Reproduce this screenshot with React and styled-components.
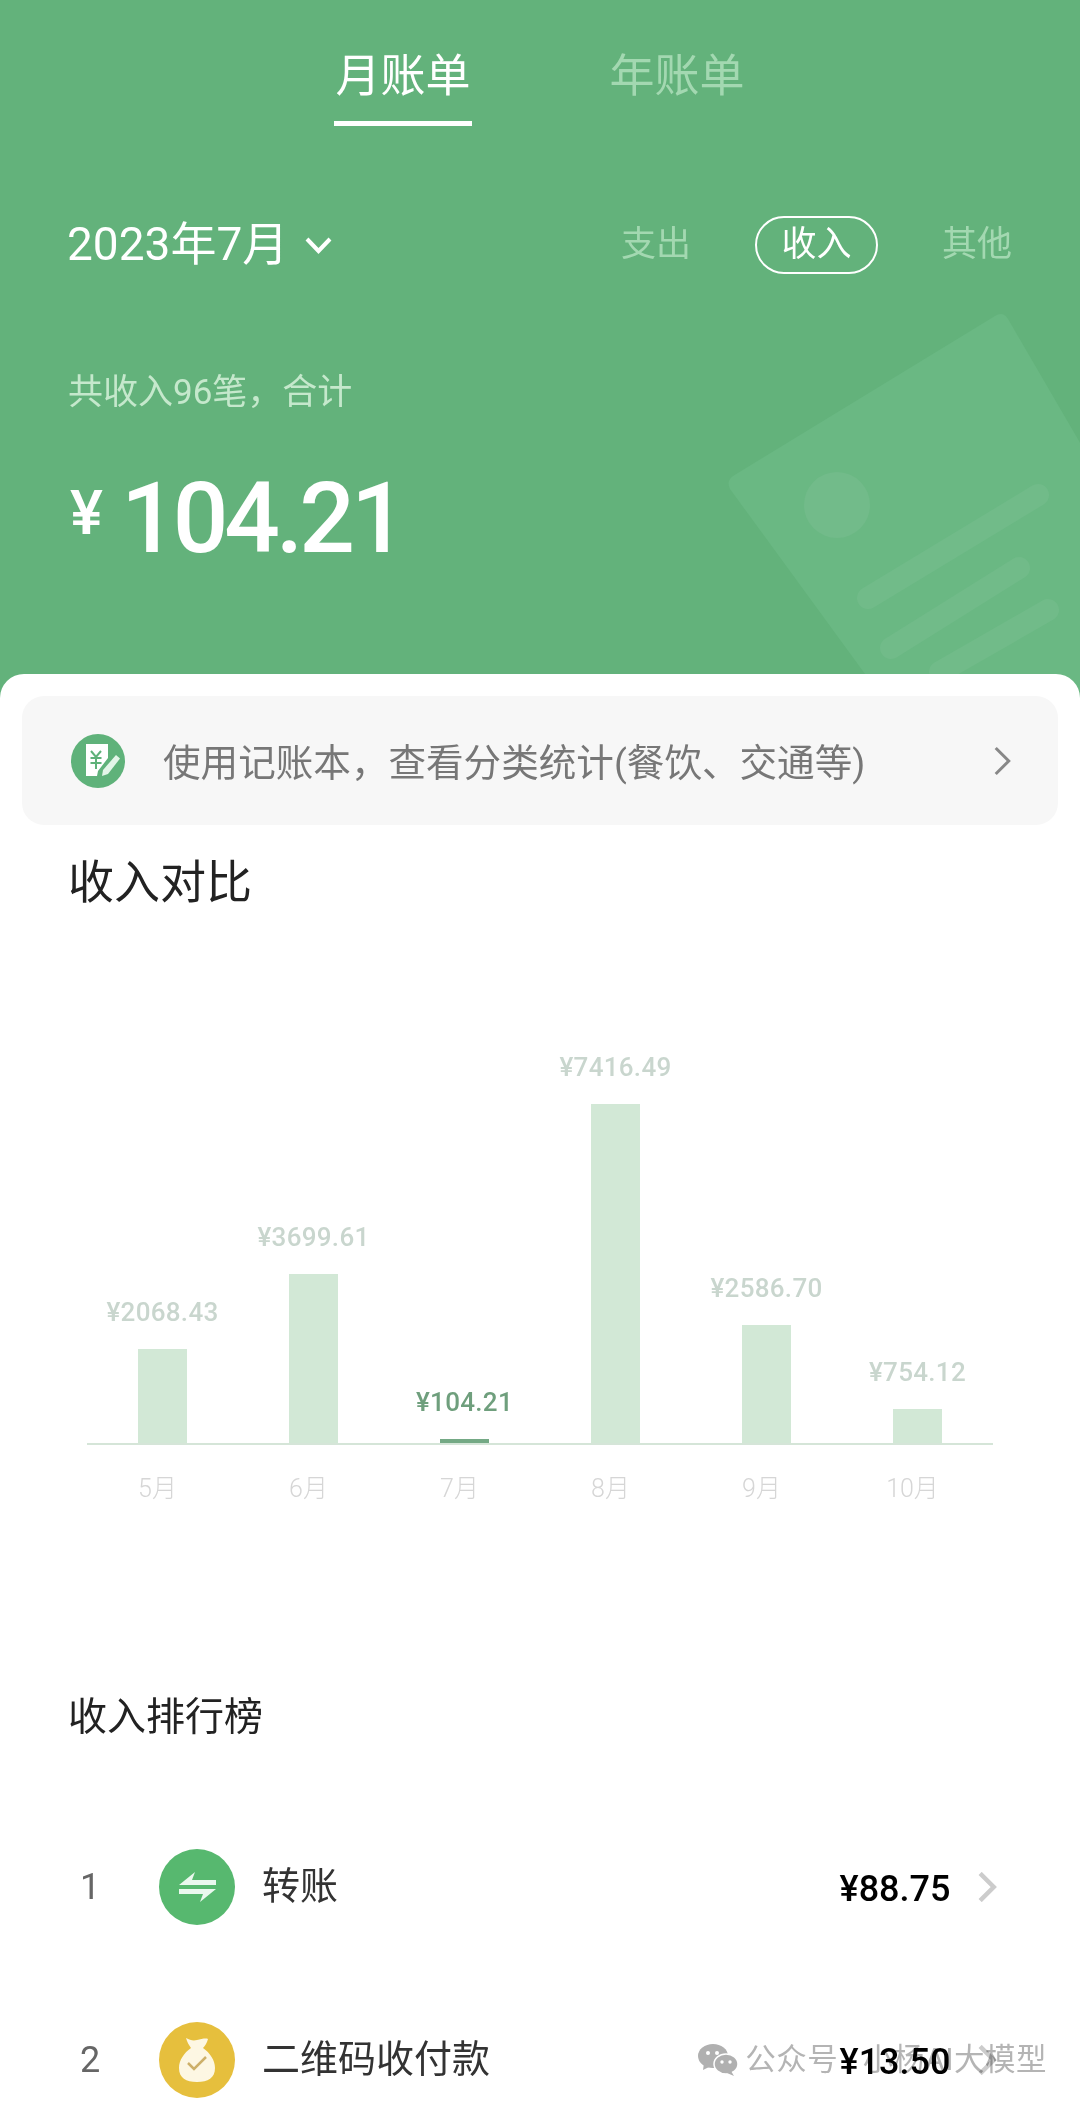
import React from "react";
import styled, { createGlobalStyle } from "styled-components";

const GlobalStyle = createGlobalStyle`
  html, body {
    margin: 0;
    padding: 0;
    background: #fff;
  }
`;

const Page = styled.div`
  position: relative;
  width: 1080px;
  height: 2104px;
  overflow: hidden;
  background: #fff;
  font-family: Roboto, "Noto Sans CJK SC", sans-serif;
`;

const Header = styled.header`
  position: relative;
  height: 700px;
  padding-top: 44px;
  box-sizing: border-box;
  background: #63b27b;
  overflow: hidden;
`;

const HeaderArt = styled.svg`
  position: absolute;
  left: 0;
  top: 0;
`;

const Tabs = styled.nav`
  position: relative;
  display: flex;
  justify-content: center;
  gap: 136px;
`;

const Tab = styled.div`
  width: 138px;
  height: 82px;
  box-sizing: border-box;
  border-bottom: 5px solid ${p => (p.$active ? "#fff" : "transparent")};
  text-align: center;
  font-size: 45px;
  line-height: 66px;
  color: ${p => (p.$active ? "#fff" : "#a3d8b1")};
`;

const FilterRow = styled.div`
  position: relative;
  display: flex;
  align-items: center;
  justify-content: space-between;
  height: 58px;
  margin-top: 90px;
  padding: 0 68px 0 67px;
`;

const MonthPicker = styled.div`
  display: flex;
  align-items: center;
  gap: 17px;
  font-size: 46px;
  color: #fff;
`;

const MonthLabel = styled.span`
  padding-bottom: 10px;
`;

const Kinds = styled.div`
  display: flex;
  align-items: center;
  gap: 64px;
`;

const Kind = styled.div`
  font-size: 35px;
  line-height: 54px;
  color: ${p => (p.$active ? "#fff" : "#a3d8b1")};
  ${p =>
    p.$active
      ? `
    width: 123px;
    height: 58px;
    box-sizing: border-box;
    border: 2px solid #fff;
    border-radius: 29px;
    text-align: center;
  `
      : ""}
`;

const Summary = styled.div`
  position: relative;
  margin: 96px 0 0 68px;
  font-size: 35px;
  line-height: 46px;
  color: #c5e8cc;
`;

const Amount = styled.div`
  position: relative;
  display: flex;
  align-items: flex-start;
  gap: 18px;
  margin: 53px 0 0 70px;
  color: #fff;
`;

const Yen = styled.span`
  font-size: 62px;
  line-height: 88px;
  font-weight: 500;
`;

const AmountValue = styled.span`
  font-size: 98px;
  line-height: 100px;
  font-weight: 500;
  letter-spacing: -4px;
`;

const Card = styled.main`
  position: relative;
  margin-top: -26px;
  padding-top: 22px;
  border-radius: 24px 24px 0 0;
  background: #fff;
`;

const Banner = styled.div`
  display: flex;
  align-items: center;
  height: 129px;
  margin: 0 22px;
  padding: 0 46px 0 49px;
  box-sizing: border-box;
  border-radius: 22px;
  background: #f7f7f7;
  font-size: 37.6px;
  color: #777;
`;

const BannerText = styled.span`
  flex: 1;
  margin-left: 38px;
  padding-bottom: 2px;
  white-space: nowrap;
`;

const Title = styled.h2`
  margin: 27px 0 0 68px;
  font-size: 46px;
  line-height: 60px;
  font-weight: 400;
  color: #222;
`;

const Plot = styled.div`
  display: flex;
  align-items: flex-end;
  height: 533px;
  margin: 0 87px;
  box-sizing: border-box;
  border-bottom: 2px solid #d5e5d8;
`;

const Column = styled.div`
  flex: 1;
  display: flex;
  flex-direction: column;
  align-items: center;
`;

const BarLabel = styled.div`
  margin-bottom: 22px;
  font-size: 26px;
  line-height: 30px;
  letter-spacing: 0.3px;
  font-weight: 500;
  color: ${p => (p.$active ? "#6f9f7d" : "#c9d6ce")};
`;

const Bar = styled.div`
  width: 49px;
  height: ${p => p.$height}px;
  background: ${p => (p.$active ? "#74a985" : "#d2e8d6")};
`;

const Months = styled.div`
  display: flex;
  margin: 29px 87px 0;
`;

const Month = styled.div`
  flex: 1;
  padding-right: 10px;
  text-align: center;
  font-size: 25px;
  font-weight: 300;
  line-height: 30px;
  color: #d6d6d6;
`;

const RankTitle = styled.h3`
  margin: 188px 0 58px 68px;
  font-size: 39px;
  line-height: 50px;
  font-weight: 400;
  color: #222;
`;

const Row = styled.div`
  display: flex;
  align-items: center;
  height: 173px;
  padding: 0 83px 0 80px;
`;

const Rank = styled.span`
  width: 79px;
  font-size: 36px;
  color: #666;
`;

const RowIcon = styled.div`
  display: flex;
  align-items: center;
  justify-content: center;
  flex: none;
  width: 76px;
  height: 76px;
  border-radius: 50%;
  background: ${p => p.$color};
`;

const RowName = styled.span`
  flex: 1;
  margin-left: 27px;
  padding-bottom: 8px;
  font-size: 38px;
  color: #333;
`;

const RowAmount = styled.span`
  margin-right: 27px;
  padding-top: 5px;
  font-size: 36px;
  font-weight: 500;
  color: #000;
`;

const Watermark = styled.div`
  position: absolute;
  right: 33px;
  bottom: 27px;
  display: flex;
  align-items: center;
  gap: 7px;
  font-size: 30.5px;
  letter-spacing: 0.5px;
  line-height: 34px;
  color: #b4b4b4;
  mix-blend-mode: multiply;
`;

const bars = [
  { month: "5月", value: "¥2068.43", height: 94 },
  { month: "6月", value: "¥3699.61", height: 169 },
  { month: "7月", value: "¥104.21", height: 4, active: true },
  { month: "8月", value: "¥7416.49", height: 339 },
  { month: "9月", value: "¥2586.70", height: 118 },
  { month: "10月", value: "¥754.12", height: 34 }
];

const Chevron = ({ color, size = 30, width = 3 }) => (
  <svg width={size * 0.65} height={size} viewBox="0 0 18 30" fill="none">
    <path
      d="M3 3l12 12L3 27"
      stroke={color}
      strokeWidth={width}
      strokeLinecap="square"
    />
  </svg>
);

const DownArrow = () => (
  <svg width="27" height="18" viewBox="0 0 27 18" fill="none">
    <path d="M2 3l11.5 12L25 3" stroke="#fff" strokeWidth="4" />
  </svg>
);

const LedgerIcon = () => (
  <svg width="54" height="54" viewBox="0 0 54 54">
    <circle cx="27" cy="27" r="27" fill="#5fb27a" />
    <path d="M15 10h22v14L27 37l-1 5H15z" fill="#fff" />
    <path
      d="M20 17l5 6 5-6M19.500 24h11M19.500 29h11M25 23v12"
      fill="none"
      stroke="#5fb27a"
      strokeWidth="2"
    />
    <path d="M45 21l4 3.500L37 40l-6 2 1-6z" fill="#e3f5e8" />
  </svg>
);

const TransferIcon = () => (
  <svg width="37" height="30" viewBox="0 0 37 30">
    <path d="M0 13L16 0l-3 8h24v5z" fill="#eaf8ee" />
    <path d="M37 17L21 30l3-8H0v-5z" fill="#eaf8ee" />
  </svg>
);

const BagIcon = () => (
  <svg width="36" height="46" viewBox="0 0 36 46">
    <path
      d="M7 1c4 2 7 3 11 2s9-2 11-1c-1 4-3 7-5 9 7 5 12 12 12 20 0 10-7 14-18 14S0 41 0 31c0-8 5-15 12-20C10 8 8 5 7 1z"
      fill="#fdf7e3"
    />
    <path
      d="M9 26l6 6 12-12"
      fill="none"
      stroke="#cdb06a"
      strokeWidth="2.500"
    />
  </svg>
);

const WeChatIcon = () => (
  <svg width="40" height="32" viewBox="0 0 40 32">
    <ellipse cx="15" cy="12" rx="15" ry="12" fill="#b0b0b0" />
    <path d="M6 19l-1 7 8-4z" fill="#b0b0b0" />
    <ellipse cx="28" cy="20" rx="12" ry="10" fill="#b0b0b0" stroke="#fff" strokeWidth="1.500" />
    <path d="M33 27l3 5-7-3z" fill="#b0b0b0" />
    <circle cx="10" cy="9" r="2" fill="#fff" />
    <circle cx="19" cy="9" r="2" fill="#fff" />
    <circle cx="24" cy="18" r="1.700" fill="#fff" />
    <circle cx="32" cy="18" r="1.700" fill="#fff" />
  </svg>
);

const App = () => (
  <Page>
    <GlobalStyle />
    <Header>
      <HeaderArt width="1080" height="700" viewBox="0 0 1080 700">
        <path
          d="M995 316q8-5 13 3l82 141v240H884L730 489q-4-8 3-13z"
          fill="#6ab883"
        />
        <circle cx="837" cy="505" r="33" fill="#72bb8a" />
        <path
          d="M868 598l170-103M891 648l128-80M940 672l108-62"
          stroke="#71bb89"
          strokeWidth="22"
          strokeLinecap="round"
        />
      </HeaderArt>
      <Tabs>
        <Tab $active>月账单</Tab>
        <Tab>年账单</Tab>
      </Tabs>
      <FilterRow>
        <MonthPicker>
          <MonthLabel>2023年7月</MonthLabel>
          <DownArrow />
        </MonthPicker>
        <Kinds>
          <Kind>支出</Kind>
          <Kind $active>收入</Kind>
          <Kind>其他</Kind>
        </Kinds>
      </FilterRow>
      <Summary>共收入96笔，合计</Summary>
      <Amount>
        <Yen>¥</Yen>
        <AmountValue>104.21</AmountValue>
      </Amount>
    </Header>
    <Card>
      <Banner>
        <LedgerIcon />
        <BannerText>使用记账本，查看分类统计(餐饮、交通等)</BannerText>
        <Chevron color="#888" />
      </Banner>
      <Title>收入对比</Title>
      <Plot>
        {bars.map(b => (
          <Column key={b.month}>
            <BarLabel $active={b.active}>{b.value}</BarLabel>
            <Bar $height={b.height} $active={b.active} />
          </Column>
        ))}
      </Plot>
      <Months>
        {bars.map(b => (
          <Month key={b.month}>{b.month}</Month>
        ))}
      </Months>
      <RankTitle>收入排行榜</RankTitle>
      <Row>
        <Rank>1</Rank>
        <RowIcon $color="#57b86f">
          <TransferIcon />
        </RowIcon>
        <RowName>转账</RowName>
        <RowAmount>¥88.75</RowAmount>
        <Chevron color="#ccc" width={4.5} />
      </Row>
      <Row>
        <Rank>2</Rank>
        <RowIcon $color="#e6bf3d">
          <BagIcon />
        </RowIcon>
        <RowName>二维码收付款</RowName>
        <RowAmount>¥13.50</RowAmount>
        <Chevron color="#ccc" width={4.5} />
      </Row>
    </Card>
    <Watermark>
      <WeChatIcon />
      <span>公众号 · 小杨AI大模型</span>
    </Watermark>
  </Page>
);

export default App;
